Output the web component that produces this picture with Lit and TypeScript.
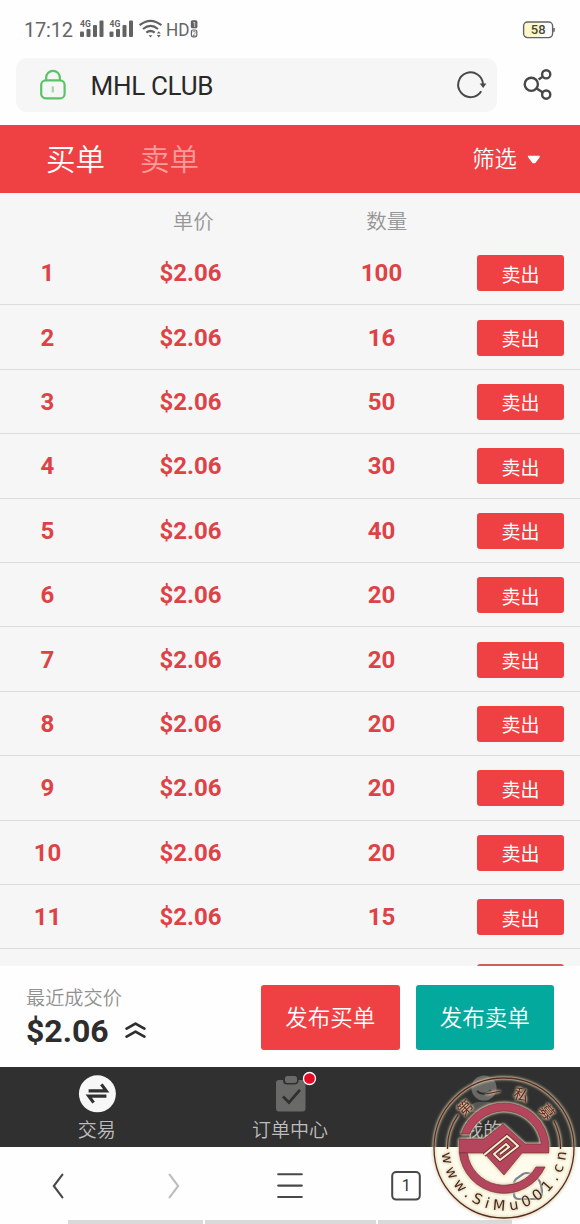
import {html, css, svg, LitElement} from 'lit';
import {customElement, property, state} from 'lit/decorators.js';
import {classMap} from 'lit/directives/class-map.js';

@customElement('status-bar')
export class StatusBar extends LitElement {
  static styles = css`
    :host {
      display: flex;
      height: 58px;
      box-sizing: border-box;
      padding: 1px 24px 0;
      align-items: center;
      font-family: Roboto, sans-serif;
      font-size: 20px;
      color: #666;
    }
    svg {
      display: block;
      overflow: visible;
    }
    .clock {
      width: 56px;
      letter-spacing: -0.2px;
    }
    .spacer {
      flex: 1;
    }
    .tiny {
      font: 700 8.5px Roboto, sans-serif;
    }
    .level {
      font: 500 13px Roboto, sans-serif;
    }
  `;

  protected _signal(x: number) {
    return svg`
      <g transform="translate(${x} 0)" fill="#626262">
        <text class="tiny" x="0" y="6.8">4G</text>
        <rect x="0" y="11.5" width="4" height="5.5" rx="1" />
        <rect x="6.5" y="9" width="4" height="8" rx="1" />
        <rect x="13" y="5" width="4" height="12" rx="1" />
        <rect x="19.5" y="0.5" width="4" height="16.5" rx="1" />
      </g>`;
  }

  render() {
    return html`
      <span class="clock">17:12</span>
      <svg width="120" height="20" viewBox="0 0 120 20">
        ${this._signal(0)}
        ${this._signal(29.5)}
        <g fill="none" stroke="#626262" stroke-width="2.2">
          <path d="M59.6 5.2Q70.5-3.6 81.4 5.2" />
          <path d="M63 9Q70.5 2.8 78 9" />
          <path d="M66.3 12.6Q70.5 9.4 74.7 12.6" />
        </g>
        <path d="M68.6 15.2h3.8l-1.9 2.2zM76.8 13.6l2-2.4 2 2.4zM76.8 15l2 2.6 2-2.6z" fill="#626262" />
        <text x="86" y="16.4" font-size="19" fill="#666" textLength="23.5" lengthAdjust="spacingAndGlyphs">HD</text>
        <rect x="110.8" y="0.3" width="6.6" height="8" rx="1.5" fill="#626262" />
        <rect x="111.4" y="10" width="5.4" height="6.8" rx="1.5" fill="#fff" stroke="#626262" stroke-width="1.2" />
        <text x="112.4" y="6.7" font-size="6.5" fill="#fff">1</text>
        <text x="112.3" y="15.8" font-size="6.5" fill="#626262">2</text>
      </svg>
      <div class="spacer"></div>
      <svg width="33" height="18" viewBox="0 0 33 18">
        <rect x="0.6" y="1" width="29" height="15.6" rx="4" fill="#fff" />
        <path d="M4.6 1.5h12.4v14.6H4.6q-3.6 0-3.6-4v-6.6q0-4 3.6-4z" fill="#fdf8c9" />
        <rect x="0.6" y="1" width="29" height="15.6" rx="4" fill="none" stroke="#626262" stroke-width="1.4" />
        <path d="M31 7v3.8" stroke="#626262" stroke-width="1.6" />
        <text class="level" x="15.2" y="13.4" text-anchor="middle" fill="#4a4636">58</text>
      </svg>
    `;
  }
}

@customElement('address-bar')
export class AddressBar extends LitElement {
  /**
   * Page title.
   */
  @property({ type: String })
  caption = '';

  static styles = css`
    :host {
      display: flex;
      height: 67px;
      box-sizing: border-box;
      padding: 0 27px 13px 16px;
      align-items: stretch;
      justify-content: space-between;
      font-family: Roboto, sans-serif;
    }
    .field {
      display: flex;
      width: 481px;
      box-sizing: border-box;
      align-items: center;
      padding: 0 10px 0 23px;
      border-radius: 11px;
      background: #f6f6f6;
    }
    .title {
      flex: 1;
      padding: 1px 0 0 22.5px;
      font-size: 26px;
      line-height: 30px;
      letter-spacing: -0.3px;
      color: #292929;
    }
    .share {
      align-self: center;
    }
  `;

  render() {
    return html`
      <div class="field">
        <svg width="29" height="32" viewBox="0 0 29 32" fill="none" stroke="#5cc268" stroke-width="2.2">
          <rect x="2.2" y="11.4" width="23.4" height="18" rx="4.5" />
          <path d="M7.2 11.4V8.6a6.8 6.8 0 0 1 13.6 0v2.8" />
          <path d="M13.8 17.4v6" stroke="#9bd9a2" />
        </svg>
        <span class="title">${this.caption}</span>
        <svg width="32" height="32" viewBox="0 0 32 32">
          <path d="M26.2 22.2A12.4 12.4 0 1 1 28 15.4" fill="none" stroke="#484848" stroke-width="2" />
          <path d="M24.6 14.4h6.8l-3.2 4.6z" fill="#484848" />
        </svg>
      </div>
      <svg class="share" width="30" height="32" viewBox="0 0 30 32" fill="none" stroke="#484848" stroke-width="2.4">
        <circle cx="8.3" cy="15.3" r="6.6" />
        <circle cx="23.2" cy="5.3" r="4.1" />
        <circle cx="23.2" cy="25.6" r="4.1" />
        <path d="M15.6 10.4l4.4-2.8M13.4 19.2l6.4 4.2" />
      </svg>
    `;
  }
}

@customElement('order-row')
export class OrderRow extends LitElement {
  @property({ type: Number })
  index = 0;

  @property({ type: String })
  price = '';

  @property({ type: Number })
  amount = 0;

  static styles = css`
    :host {
      display: grid;
      grid-template-columns: 95px 191px 191px 87px;
      height: 64.4px;
      flex: none;
      box-sizing: border-box;
      align-items: center;
      padding-top: 1px;
      border-bottom: 1.5px solid #dcdcdc;
      font: 700 24px/28px Roboto, sans-serif;
      text-align: center;
      color: #dd4346;
    }
    button {
      height: 36px;
      padding: 1px 0 0;
      border: none;
      border-radius: 3px;
      background: #ef4143;
      color: #fff;
      font: 400 19px/34px "Noto Sans CJK SC", sans-serif;
    }
  `;

  render() {
    return html`
      <span>${this.index}</span>
      <span>${this.price}</span>
      <span>${this.amount}</span>
      <button>卖出</button>
    `;
  }
}

@customElement('seal-mark')
export class SealMark extends LitElement {
  static styles = css`
    :host {
      display: block;
    }
    svg {
      display: block;
      overflow: visible;
    }
    .lines {
      fill: none;
      stroke: #5a2a22;
      stroke-width: 1.3;
    }
    .glow {
      filter: drop-shadow(0 0 1px #f3ebc4) drop-shadow(0 0 1.5px #c9c09a);
    }
    .name {
      font: 400 15px "Noto Sans CJK SC", sans-serif;
      fill: #6b231f;
    }
    .site {
      font: 400 14.5px "DejaVu Sans", Verdana, sans-serif;
      fill: #4a2822;
    }
    .emblem {
      fill: #b5455c;
      stroke: #70303c;
      stroke-width: 0.7;
    }
    .coil {
      fill: none;
      stroke: #6d3036;
      stroke-width: 3.8;
    }
    .coil.light {
      stroke: #f6eccb;
      stroke-width: 2;
    }
  `;

  render() {
    return html`
      <svg width="142" height="142" viewBox="-71 -71 142 142">
        <defs>
          <path id="lower" d="M-62.5 0A62.5 62.5 0 0 0 62.5 0" />
        </defs>
        <path d="M-70-1A70 70 0 0 0 70-1z" fill="#fffbea" opacity="0.85" />
        <path d="M10 42v-6q0-3 2-5l7-5q4-2 8 0l7 5q2 2 3 6l1 6q0 8-5 8H15q-5 0-5-5z" fill="none" stroke="#7d8292" stroke-width="2.2" />
        <g class="glow">
          <circle class="lines" r="70" />
          <path class="lines" d="M-56.5 1v-1A56.5 56.5 0 0 1-46-33M50-27A56.5 56.5 0 0 1 56.5 0v1" />
          <g class="name" text-anchor="middle">
            <text transform="rotate(-44) translate(0 -50.5)">第</text>
            <text transform="rotate(-11) translate(0 -50.5)">一</text>
            <text transform="rotate(18) translate(0 -50.5)">私</text>
            <text transform="rotate(50) translate(0 -50.5)">募</text>
          </g>
          <text class="site">
            <textPath href="#lower" startOffset="5" textLength="187">www.SiMu001.cn</textPath>
          </text>
          <path class="emblem" d="M-39-14h-3.8A45 45 0 0 1 44.7 5H18L0 27-20 5H-44.7V-9H-20L-1-24 21-4H37.3A37.5 37.5 0 0 0-34.5-14z" />
          <path class="emblem" d="M-44.7 5A45 45 0 0 0 41 19H32A37 37 0 0 1-36.6 5z" />
        </g>
        <path class="coil" d="M-20 7L3-12 14-2-4 12-10 6 2-4 5-1-4 6" />
        <path class="coil light" d="M-20 7L3-12 14-2-4 12-10 6 2-4 5-1-4 6" />
      </svg>
    `;
  }
}

@customElement('app-root')
export class AppRoot extends LitElement {
  /**
   * Selected side of the order book.
   */
  @state()
  protected _side: string = 'buy';

  /**
   * Amounts of the listed orders.
   */
  @state()
  protected _amounts: number[] = [100, 16, 50, 30, 40, 20, 20, 20, 20, 20, 15];

  static styles = css`
    :host {
      position: relative;
      display: flex;
      flex-direction: column;
      width: 580px;
      height: 1224px;
      overflow: hidden;
      background: #fefefe;
      font-family: Roboto, "Noto Sans CJK SC", sans-serif;
    }
    svg {
      display: block;
    }
    .head {
      display: flex;
      height: 67.5px;
      box-sizing: border-box;
      flex: none;
      align-items: center;
      padding: 0 39px 3px 46px;
      background: #ef4143;
      color: #fff;
      font-family: "Noto Sans CJK SC", sans-serif;
    }
    .tab {
      width: 94px;
      font-size: 29.5px;
      line-height: 44px;
      font-weight: 350;
      color: #f89c9a;
    }
    .tab.active {
      color: #fff;
    }
    .filter {
      display: flex;
      align-items: center;
      gap: 10px;
      margin-left: auto;
      font-size: 22.4px;
      font-weight: 350;
    }
    .filter svg {
      margin-top: 5px;
    }
    .columns {
      display: grid;
      grid-template-columns: 1fr 1fr;
      height: 48.5px;
      box-sizing: border-box;
      flex: none;
      padding: 11px 96.7px 0;
      text-align: center;
      font: 350 20.5px/32px "Noto Sans CJK SC", sans-serif;
      color: #969696;
      background: #f6f6f6;
    }
    .list {
      display: flex;
      flex-direction: column;
      height: 724.5px;
      flex: none;
      overflow: hidden;
      background: #f6f6f6;
    }
    .peek {
      width: 87px;
      height: 36px;
      flex: none;
      margin: 14.5px 0 0 477px;
      border-radius: 3px;
      background: #d35c5b;
    }
    .deal {
      display: flex;
      height: 101.5px;
      flex: none;
      box-sizing: border-box;
      align-items: center;
      gap: 16px;
      padding: 2px 26px 0 26px;
      background: #fefefe;
    }
    .last {
      flex: 1;
    }
    .label {
      font: 350 19.2px/27px "Noto Sans CJK SC", sans-serif;
      color: #919191;
    }
    .price {
      display: flex;
      align-items: center;
      gap: 16px;
      padding-top: 1px;
      font: 700 32px/38px Roboto, sans-serif;
      color: #2d2d2d;
    }
    .price svg {
      margin-top: -3px;
    }
    .publish {
      width: 138.5px;
      height: 65px;
      padding: 0 0 2px;
      border: none;
      border-radius: 3px;
      background: #ef4143;
      color: #fff;
      font: 350 22.5px/32px "Noto Sans CJK SC", sans-serif;
    }
    .publish.sell {
      background: #03a99c;
    }
    .nav {
      display: grid;
      grid-template-columns: repeat(3, 1fr);
      height: 80px;
      flex: none;
      background: #303030;
    }
    .item {
      display: flex;
      flex-direction: column;
      align-items: center;
      padding-top: 7px;
      font: 350 19px/28px "Noto Sans CJK SC", sans-serif;
      color: #bdbdbd;
    }
    .item svg {
      overflow: visible;
      margin-bottom: 3px;
    }
    .browser {
      display: grid;
      grid-template-columns: repeat(5, 116px);
      height: 73px;
      box-sizing: border-box;
      flex: none;
      align-items: center;
      justify-items: center;
      padding-top: 4px;
    }
    .page {
      font: 400 16px Roboto, sans-serif;
    }
    .strips {
      display: flex;
      gap: 2px;
      height: 4px;
      padding-left: 68px;
    }
    .strips i {
      width: 135px;
      background: #dadada;
    }
    .strips i + i {
      width: 171px;
    }
    .strips i + i + i {
      width: 134px;
    }
    seal-mark {
      position: absolute;
      left: 433px;
      top: 1077px;
    }
  `;

  render() {
    return html`
      <status-bar></status-bar>
      <address-bar caption="MHL CLUB"></address-bar>
      <div class="head">
        <div class=${classMap({ tab: true, active: this._side === 'buy' })} @click=${() => this._select('buy')}>买单</div>
        <div class=${classMap({ tab: true, active: this._side === 'sell' })} @click=${() => this._select('sell')}>卖单</div>
        <div class="filter">
          <span>筛选</span>
          <svg width="14" height="9" viewBox="0 0 14 9">
            <path d="M1.8 1.6h10.2L8.2 6.8q-1.3 1.2-2.6 0z" fill="#fff" stroke="#fff" stroke-width="1.8" stroke-linejoin="round" />
          </svg>
        </div>
      </div>
      <div class="columns"><span>单价</span><span>数量</span></div>
      <div class="list">
        ${this._amounts.map((amount, idx) => html`
          <order-row .index=${idx + 1} price="$2.06" .amount=${amount}></order-row>
        `)}
        <div class="peek"></div>
      </div>
      <div class="deal">
        <div class="last">
          <div class="label">最近成交价</div>
          <div class="price">
            <span>$2.06</span>
            <svg width="21" height="18" viewBox="0 0 21 18" fill="none" stroke="#2d2d2d" stroke-width="2.7" stroke-linecap="round" stroke-linejoin="round">
              <path d="M1.6 7.6l8.9-5 8.9 5M1.6 15.6l8.9-5 8.9 5" />
            </svg>
          </div>
        </div>
        <button class="publish">发布买单</button>
        <button class="publish sell">发布卖单</button>
      </div>
      <div class="nav">
        <div class="item">
          <svg width="38" height="38" viewBox="0 0 38 38">
            <circle cx="19.4" cy="19.8" r="18.5" fill="#f7f7f7" />
            <path d="M10.6 16.8h17.6l-4.8-6.4M28.4 22.2H10.8l4.8 6.4" fill="none" stroke="#303030" stroke-width="3.2" />
          </svg>
          交易
        </div>
        <div class="item">
          <svg width="38" height="38" viewBox="0 0 38 38">
            <rect x="5" y="6" width="29.5" height="31.5" rx="3" fill="#696a68" />
            <rect x="12" y="0.5" width="15.5" height="10" rx="4" fill="#303030" />
            <rect x="14" y="2" width="12" height="7" rx="2.5" fill="#696a68" />
            <path d="M12 22.4l6 6 11-12.6" fill="none" stroke="#303030" stroke-width="2.8" />
            <circle cx="38.5" cy="4.5" r="6" fill="#e60a26" stroke="#fff" stroke-width="1.3" />
          </svg>
          订单中心
        </div>
        <div class="item">
          <svg width="38" height="38" viewBox="0 0 38 38">
            <circle cx="20" cy="14" r="12.6" fill="#696a68" />
            <path d="M13 17q6 6 14-1" fill="none" stroke="#303030" stroke-width="2" />
            <path d="M5 38q1-10 9-10h10q8 0 9 10z" fill="#555654" />
          </svg>
          我的
        </div>
      </div>
      <div class="browser">
        <svg width="12" height="26" viewBox="0 0 12 26" fill="none" stroke="#484848" stroke-width="2.1" stroke-linecap="round">
          <path d="M10.4 1.6L1.8 13l8.6 11.4" />
        </svg>
        <svg width="12" height="26" viewBox="0 0 12 26" fill="none" stroke="#bdbdbd" stroke-width="2.1" stroke-linecap="round">
          <path d="M1.6 1.6L10.2 13l-8.6 11.4" />
        </svg>
        <svg width="26" height="26" viewBox="0 0 26 26" stroke="#484848" stroke-width="2.1" stroke-linecap="round">
          <path d="M1.2 1.2h23.6M1.2 12.6h23.6M1.2 24h23.6" />
        </svg>
        <svg width="30" height="30" viewBox="0 0 30 30">
          <rect x="1.2" y="1" width="27.6" height="27.6" rx="4" fill="none" stroke="#484848" stroke-width="2" />
          <text class="page" x="15.2" y="20" text-anchor="middle" fill="#333">1</text>
        </svg>
      </div>
      <div class="strips"><i></i><i></i><i></i></div>
      <seal-mark></seal-mark>
    `;
  }

  /**
   * Methods
   */
  protected _select(side: string) {
    this._side = side;
  }
}
